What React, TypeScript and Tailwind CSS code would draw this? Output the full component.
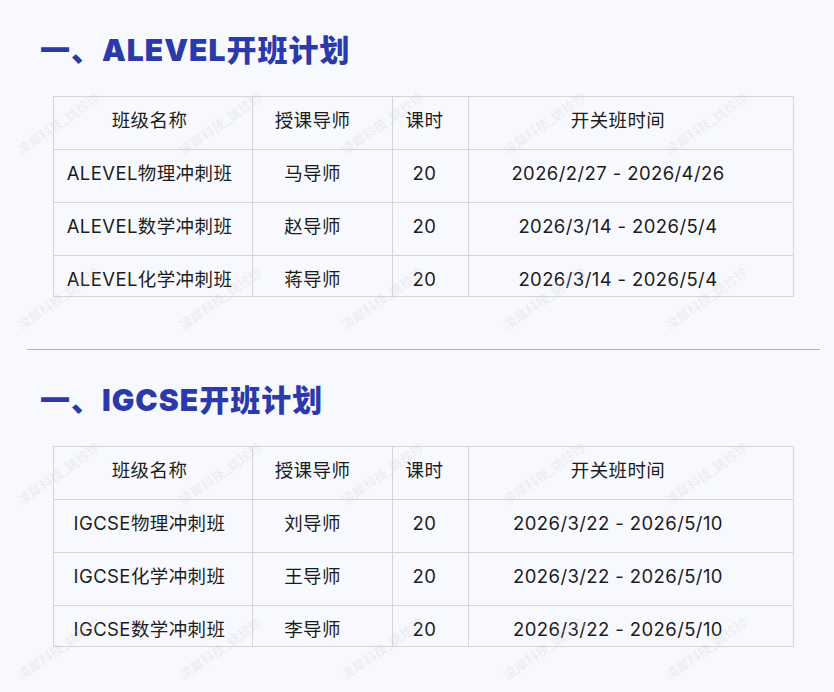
import React from "react";

type Row = [string, string, string, string];

const alevel: Row[] = [
  ["ALEVEL物理冲刺班", "马导师", "20", "2026/2/27 - 2026/4/26"],
  ["ALEVEL数学冲刺班", "赵导师", "20", "2026/3/14 - 2026/5/4"],
  ["ALEVEL化学冲刺班", "蒋导师", "20", "2026/3/14 - 2026/5/4"],
];

const igcse: Row[] = [
  ["IGCSE物理冲刺班", "刘导师", "20", "2026/3/22 - 2026/5/10"],
  ["IGCSE化学冲刺班", "王导师", "20", "2026/3/22 - 2026/5/10"],
  ["IGCSE数学冲刺班", "李导师", "20", "2026/3/22 - 2026/5/10"],
];

const header: Row = ["班级名称", "授课导师", "课时", "开关班时间"];

const cellPad = ["pr-[7px]", "pr-[20px]", "pr-[12px]", "pr-[26px]"];

function Cells({ row }: { row: Row }) {
  return (
    <>
      {row.map((c, i) => (
        <div
          key={i}
          className={`flex h-[53px] items-center justify-center border-b border-[#d6d6da] pb-[4px] ${cellPad[i]} ${
            i < 3 ? "border-r" : ""
          }`}
        >
          {c}
        </div>
      ))}
    </>
  );
}

function Table({ rows }: { rows: Row[] }) {
  return (
    <div className="ml-[53px] h-[201px] w-[741px] overflow-hidden border border-[#d6d6da] text-[18.5px] tracking-[0.4px] text-[#1c1c1c]">
      <div className="grid grid-cols-[199px_140px_76px_324px]">
        <Cells row={header} />
        {rows.map((r, i) => (
          <Cells key={i} row={r} />
        ))}
      </div>
    </div>
  );
}

function Heading({ children }: { children: React.ReactNode }) {
  return (
    <h2 className="pl-[40px] text-[30px] font-black leading-[40px] tracking-[1px] text-[#2b3aa8]">
      {children}
    </h2>
  );
}

const wmRows = [157, 332, 507, 682];
const wmCols = [23, 185, 347, 509, 671];

export default function App() {
  return (
    <div
      className="relative min-h-[692px] w-[834px] overflow-hidden bg-[#f8f9fe]"
      style={{ fontFamily: 'Inter, "Noto Sans CJK SC", sans-serif' }}
    >
      <div className="pt-[30px]">
        <Heading>一、ALEVEL开班计划</Heading>
        <div className="mt-[26px]">
          <Table rows={alevel} />
        </div>
        <div className="ml-[27px] mt-[52px] h-px w-[793px] bg-[#b3b3b6]" />
        <div className="mt-[30px]">
          <Heading>一、IGCSE开班计划</Heading>
        </div>
        <div className="mt-[26px]">
          <Table rows={igcse} />
        </div>
      </div>
      <div className="pointer-events-none absolute inset-0">
        {wmRows.map((y) =>
          wmCols.map((x) => (
            <div
              key={`${x}-${y}`}
              className="absolute origin-bottom-left -rotate-[35deg] whitespace-nowrap text-[13px] leading-[13px] text-[#c8cad3] opacity-30"
              style={{ left: x, top: y - 13 }}
            >
              凌犀科技_姚珍珍
            </div>
          ))
        )}
      </div>
    </div>
  );
}
